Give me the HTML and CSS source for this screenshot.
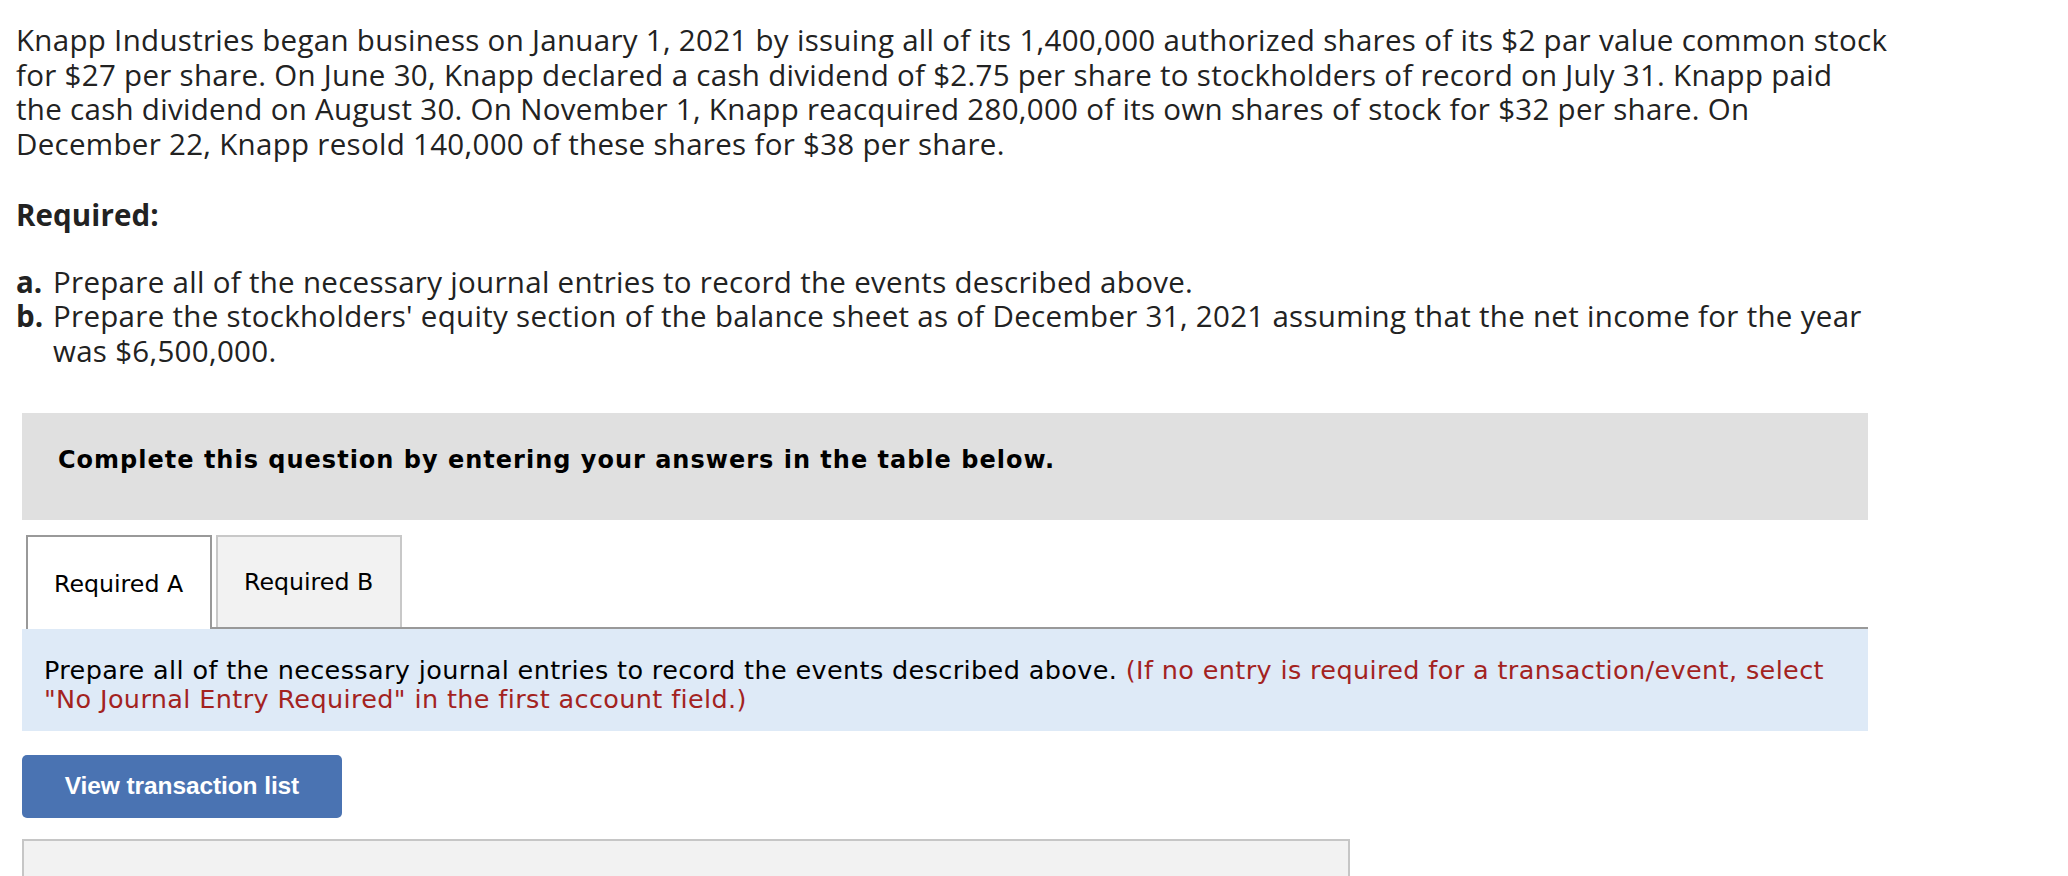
FILE: index.html
```html
<!DOCTYPE html>
<html lang="en">
<head>
<meta charset="utf-8">
<title>Knapp Industries</title>
<link rel="stylesheet" href="styles.css">
</head>
<body>
<main class="question">
  <section class="prompt">
    <p class="intro">Knapp Industries began business on January 1, 2021 by issuing all of its 1,400,000 authorized shares of its $2 par value common stock<br>for $27 per share. On June 30, Knapp declared a cash dividend of $2.75 per share to stockholders of record on July 31. Knapp paid<br>the cash dividend on August 30. On November 1, Knapp reacquired 280,000 of its own shares of stock for $32 per share. On<br>December 22, Knapp resold 140,000 of these shares for $38 per share.</p>
    <h2 class="req-title">Required:</h2>
    <ol class="req-list">
      <li><b class="req-label">a.</b><span>Prepare all of the necessary journal entries to record the events described above.</span></li>
      <li><b class="req-label">b.</b><span>Prepare the stockholders' equity section of the balance sheet as of December 31, 2021 assuming that the net income for the year<br>was $6,500,000.</span></li>
    </ol>
  </section>

  <section class="workspace">
    <div class="notice">Complete this question by entering your answers in the table below.</div>

    <div class="tabs">
      <div class="tab tab-active">Required A</div>
      <div class="tab">Required B</div>
    </div>

    <div class="instructions">Prepare all of the necessary journal entries to record the events described above. <span class="hint">(If no entry is required for a transaction/event, select<br>"No Journal Entry Required" in the first account field.)</span></div>

    <button class="btn" type="button">View transaction list</button>

    <div class="panel"></div>
  </section>
</main>
</body>
</html>
```

FILE: styles.css
```css
html, body {
  margin: 0;
  padding: 0;
  background: #ffffff;
}

.question {
  padding-top: 23px;
}

.prompt {
  padding-left: 16px;
  font-family: "Open Sans", "Liberation Sans", sans-serif;
  font-size: 29.5px;
  line-height: 34.7px;
  color: #222222;
  letter-spacing: 0.3px;
}

.intro {
  margin: 0;
  white-space: nowrap;
}

.req-title {
  margin: 36px 0 0 0;
  font-size: inherit;
  line-height: inherit;
  font-weight: 700;
  letter-spacing: 0.1px;
}

.req-list {
  list-style: none;
  margin: 32px 0 0 0;
  padding: 0;
}

.req-list li {
  display: grid;
  grid-template-columns: 37px auto;
  white-space: nowrap;
}

.req-label {
  font-weight: 700;
  letter-spacing: 0;
}

.workspace {
  margin: 44px 0 0 22px;
  width: 1846px;
  font-family: "DejaVu Sans", "Liberation Sans", sans-serif;
  color: #000000;
}

.notice {
  background: #e0e0e0;
  padding: 33px 36px 46px;
  font-size: 24px;
  line-height: 28px;
  font-weight: 700;
  letter-spacing: 1px;
}

.tabs {
  display: flex;
  align-items: flex-start;
  gap: 4px;
  height: 94px;
  margin-top: 15px;
  padding-left: 4px;
  background: linear-gradient(#999999, #999999) no-repeat right bottom / calc(100% - 190px) 2px;
}

.tab {
  box-sizing: border-box;
  width: 186px;
  height: 92px;
  display: flex;
  align-items: center;
  padding-left: 26px;
  border: 2px solid #c8c8c8;
  border-bottom: none;
  background: #f2f2f2;
  font-size: 23.7px;
}

.tab-active {
  height: 94px;
  border-color: #999999;
  background: #ffffff;
  padding-top: 2px;
}

.instructions {
  background: #deeaf7;
  padding: 27px 22px 17px;
  font-size: 25.5px;
  line-height: 29px;
  letter-spacing: 0.37px;
  white-space: nowrap;
}

.hint {
  color: #a3231f;
}

.btn {
  display: block;
  margin-top: 24px;
  width: 320px;
  height: 63px;
  border: none;
  border-radius: 5px;
  background: #4a73b2;
  color: #ffffff;
  font-family: "Liberation Sans", Arial, sans-serif;
  font-weight: 700;
  font-size: 24.5px;
  letter-spacing: -0.1px;
  padding: 0;
}

.panel {
  margin-top: 21px;
  width: 1328px;
  height: 120px;
  box-sizing: border-box;
  border: 2px solid #c6c6c6;
  background: #f2f2f2;
}
```
